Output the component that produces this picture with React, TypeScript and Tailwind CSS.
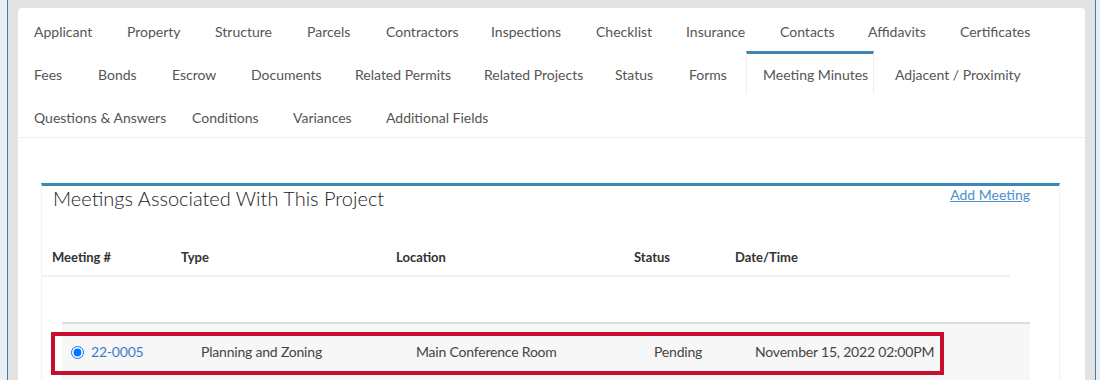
import React from "react";

type Tab = { t: string; w: string };

const row1: Tab[] = [
  { t: "Applicant", w: "w-[89px]" },
  { t: "Property", w: "w-[84px]" },
  { t: "Structure", w: "w-[88px]" },
  { t: "Parcels", w: "w-[75px]" },
  { t: "Contractors", w: "w-[101px]" },
  { t: "Inspections", w: "w-[101px]" },
  { t: "Checklist", w: "w-[86px]" },
  { t: "Insurance", w: "w-[90px]" },
  { t: "Contacts", w: "w-[84px]" },
  { t: "Affidavits", w: "w-[88px]" },
  { t: "Certificates", w: "w-auto" },
];
const row2: Tab[] = [
  { t: "Fees", w: "w-[60px]" },
  { t: "Bonds", w: "w-[70px]" },
  { t: "Escrow", w: "w-[75px]" },
  { t: "Documents", w: "w-[100px]" },
  { t: "Related Permits", w: "w-[125px]" },
  { t: "Related Projects", w: "w-[127px]" },
  { t: "Status", w: "w-[70px]" },
  { t: "Forms", w: "w-[70px]" },
  { t: "Meeting Minutes", w: "w-[128px]" },
  { t: "Adjacent / Proximity", w: "w-auto" },
];
const row3: Tab[] = [
  { t: "Questions & Answers", w: "w-[154px]" },
  { t: "Conditions", w: "w-[97px]" },
  { t: "Variances", w: "w-[89px]" },
  { t: "Additional Fields", w: "w-auto" },
];

const cols = "grid grid-cols-[129px_215px_238px_101px_285px]";

function TabRow({ items }: { items: Tab[] }) {
  return (
    <div className="flex h-[43px]">
      {items.map(({ t, w }) => {
        const active = t === "Meeting Minutes";
        return (
          <div
            key={t}
            className={
              active
                ? `${w} mr-[4px] flex h-[43px] items-center whitespace-nowrap border-x border-t-[3px] border-x-[#eeeeee] border-t-[#3a87b8] bg-white pl-4 pt-[1px] text-[#555]`
                : `${w} mr-[4px] flex h-[43px] items-center whitespace-nowrap border-x border-t-[3px] border-transparent pl-4 pt-[1px] text-[#555]`
            }
          >
            {t}
          </div>
        );
      })}
    </div>
  );
}

export default function App() {
  return (
    <div
      className="flex h-[380px] w-[1100px] overflow-hidden bg-[#e3e3e3] text-[14px]"
      style={{ fontFamily: "Lato, 'Noto Sans', sans-serif" }}
    >
      <div className="w-[7px] shrink-0 bg-[#e9eef3]" />
      <div className="w-px shrink-0 bg-[#3a7fb5]" />
      <div className="w-[10px] shrink-0" />
      <div className="mt-2 flex w-[1067px] shrink-0 flex-col rounded-t bg-white">
        <div className="-ml-px border-b border-[#eeeeee]">
          <TabRow items={row1} />
          <TabRow items={row2} />
          <TabRow items={row3} />
        </div>
        <div className="ml-[23px] mr-[25px] mt-[45px] flex-1 border-x border-t-[3px] border-x-[#f2f2f2] border-t-[#3a87b8]">
          <div className="flex items-start justify-between pl-[11px] pr-[29px]">
            <div className="text-[20px] font-light leading-6 text-[#222]">Meetings Associated With This Project</div>
            <a className="mt-[-3px] text-[14px] leading-6 text-[#4d8fcc] underline">Add Meeting</a>
          </div>
          <div className={`${cols} mt-[37px] w-[968px] border-b-2 border-[#f2f2f2] pb-[8px] text-[13px] font-bold leading-5 text-[#333]`}>
            <div className="pl-[10px]">Meeting #</div>
            <div className="pl-[10px]">Type</div>
            <div className="pl-[10px]">Location</div>
            <div className="pl-[10px]">Status</div>
            <div className="pl-[10px]">Date/Time</div>
          </div>
          <div className="relative ml-5 mt-[45px] w-[968px] border-t-2 border-[#dddddd] bg-[#f7f7f7]">
            <div className={`${cols} h-[56px] items-start pt-[18px] leading-[20px] tracking-[-0.2px] text-[#444]`}>
              <div className="flex items-center gap-[7px] pl-[9px]">
                <input type="radio" checked readOnly className="m-0 h-[13px] w-[13px]" />
                <span className="text-[#3b7dc4]">22-0005</span>
              </div>
              <div className="pl-[10px]">Planning and Zoning</div>
              <div className="pl-[10px]">Main Conference Room</div>
              <div className="pl-[10px]">Pending</div>
              <div className="pl-[10px]">November 15, 2022 02:00PM</div>
            </div>
            <div className="absolute left-[-11px] top-[8px] h-[43px] w-[893px] border-4 border-[#c8102e]" />
          </div>
        </div>
      </div>
      <div className="w-[10px] shrink-0" />
      <div className="w-px shrink-0 bg-[#3a7fb5]" />
      <div className="w-[4px] shrink-0 bg-[#e9eef3]" />
    </div>
  );
}
